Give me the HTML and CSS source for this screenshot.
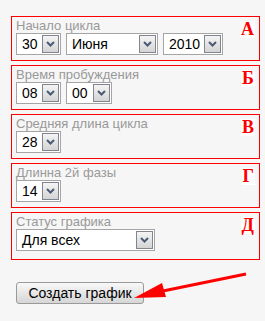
FILE: index.html
```html
<!DOCTYPE html>
<html>
<head>
    <meta charset="utf-8">
    <title>Календарь цикла</title>
    <link rel="stylesheet" href="styles.css">
</head>
<body>
    <div class="page">
        <div class="field">
            <div class="field-body">
                <div class="label">Начало цикла</div>
                <div class="row">
                    <div class="sel w45"><span class="val">30</span><span class="btn"><svg width="9" height="6" viewBox="0 0 9 6"><path d="M1 1 L4.5 4.5 L8 1" fill="none" stroke="#4b5a75" stroke-width="2"/></svg></span></div>
                    <div class="sel w92"><span class="val">Июня</span><span class="btn"><svg width="9" height="6" viewBox="0 0 9 6"><path d="M1 1 L4.5 4.5 L8 1" fill="none" stroke="#4b5a75" stroke-width="2"/></svg></span></div>
                    <div class="sel w60"><span class="val">2010</span><span class="btn"><svg width="9" height="6" viewBox="0 0 9 6"><path d="M1 1 L4.5 4.5 L8 1" fill="none" stroke="#4b5a75" stroke-width="2"/></svg></span></div>
                </div>
            </div>
            <div class="mark">А</div>
        </div>
        <div class="field">
            <div class="field-body">
                <div class="label">Время пробуждения</div>
                <div class="row">
                    <div class="sel w45"><span class="val">08</span><span class="btn"><svg width="9" height="6" viewBox="0 0 9 6"><path d="M1 1 L4.5 4.5 L8 1" fill="none" stroke="#4b5a75" stroke-width="2"/></svg></span></div>
                    <div class="sel w46"><span class="val">00</span><span class="btn"><svg width="9" height="6" viewBox="0 0 9 6"><path d="M1 1 L4.5 4.5 L8 1" fill="none" stroke="#4b5a75" stroke-width="2"/></svg></span></div>
                </div>
            </div>
            <div class="mark">Б</div>
        </div>
        <div class="field">
            <div class="field-body">
                <div class="label">Средняя длина цикла</div>
                <div class="row">
                    <div class="sel w45"><span class="val">28</span><span class="btn"><svg width="9" height="6" viewBox="0 0 9 6"><path d="M1 1 L4.5 4.5 L8 1" fill="none" stroke="#4b5a75" stroke-width="2"/></svg></span></div>
                </div>
            </div>
            <div class="mark">В</div>
        </div>
        <div class="field">
            <div class="field-body">
                <div class="label">Длинна 2й фазы</div>
                <div class="row">
                    <div class="sel w45"><span class="val">14</span><span class="btn"><svg width="9" height="6" viewBox="0 0 9 6"><path d="M1 1 L4.5 4.5 L8 1" fill="none" stroke="#4b5a75" stroke-width="2"/></svg></span></div>
                </div>
            </div>
            <div class="mark">Г</div>
        </div>
        <div class="field last">
            <div class="field-body">
                <div class="label">Статус графика</div>
                <div class="row">
                    <div class="sel w139"><span class="val">Для всех</span><span class="btn"><svg width="9" height="6" viewBox="0 0 9 6"><path d="M1 1 L4.5 4.5 L8 1" fill="none" stroke="#4b5a75" stroke-width="2"/></svg></span></div>
                </div>
            </div>
            <div class="mark">Д</div>
        </div>
        <button class="create">Создать график</button>
    </div>
    <svg class="arrow" width="265" height="321" viewBox="0 0 265 321">
        <line x1="246" y1="274" x2="158" y2="292" stroke="#ff0000" stroke-width="3"/>
        <polygon points="134,298 162,283 166,297" fill="#ff0000"/>
    </svg>
</body>
</html>
```

FILE: styles.css
```css
body {
    margin: 0;
    background: #f6f6f6;
    font-family: "Liberation Sans", Arial, sans-serif;
}
.page {
    width: 249px;
    padding: 16px 0 0 11px;
}
.field {
    display: flex;
    justify-content: space-between;
    border: 1px solid #ff0000;
    padding: 1px 4px 5px 4px;
    margin-bottom: 4px;
}
.field.last {
    padding-bottom: 8px;
}
.label {
    font-size: 13px;
    line-height: 15px;
    color: #999;
}
.row {
    display: flex;
    gap: 5px;
}
.sel {
    display: flex;
    align-items: stretch;
    height: 22px;
    box-sizing: border-box;
    border: 1px solid #a5a5a5;
    background: #fff;
    padding: 1px;
}
.w45 { width: 45px; }
.w46 { width: 46px; }
.w60 { width: 60px; }
.w92 { width: 92px; }
.w139 { width: 139px; }
.val {
    flex: 1;
    font-size: 14px;
    line-height: 18px;
    padding-left: 4px;
    color: #000;
}
.btn {
    width: 17px;
    box-sizing: border-box;
    border: 1px solid #808590;
    background: linear-gradient(#f4f4f4, #d4d4d4);
    display: flex;
    align-items: center;
    justify-content: center;
}
.mark {
    margin-top: 3px;
    align-self: flex-start;
    font-family: "Liberation Serif", "Times New Roman", serif;
    font-weight: bold;
    font-size: 18px;
    line-height: 17px;
    color: #ff0000;
    background: #fff;
    padding: 0 1px;
}
.create {
    margin: 18px 0 0 5px;
    width: 128px;
    height: 22px;
    font-family: "Liberation Sans", Arial, sans-serif;
    font-size: 14px;
    color: #000;
    border: 1px solid #9a9a9a;
    border-radius: 3px;
    background: linear-gradient(#f8f8f8, #d6d6d6);
    padding: 0;
}
.arrow {
    position: absolute;
    left: 0;
    top: 0;
    pointer-events: none;
}
```
